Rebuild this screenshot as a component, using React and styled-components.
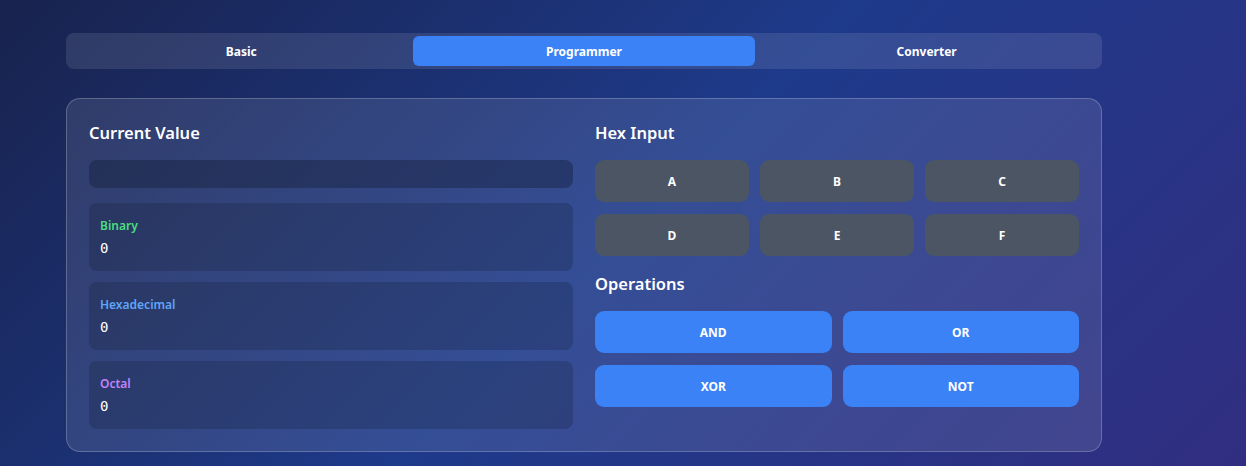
import React, { useState } from "react";
import styled, { createGlobalStyle } from "styled-components";

const GlobalStyle = createGlobalStyle`
	html, body {
		margin: 0;
		padding: 0;
		height: 100%;
	}
	body {
		font-family: "Noto Sans", "Open Sans", sans-serif;
		background: linear-gradient(135deg, #18224d 0%, #1e3a8a 50%, #312e81 100%);
		color: #fff;
		overflow: hidden;
	}
`;

const Page = styled.div`
	width: 1036px;
	margin: 0 0 0 66px;
	padding-top: 33px;
`;

const Tabs = styled.div`
	display: grid;
	grid-template-columns: repeat(3, 1fr);
	padding: 3px 4px;
	border-radius: 8px;
	background: rgba(255, 255, 255, 0.1);
	margin-bottom: 29px;
`;

const Tab = styled.button`
	height: 30px;
	border: none;
	border-radius: 6px;
	font-family: inherit;
	font-size: 12px;
	font-weight: 700;
	color: #fff;
	cursor: pointer;
	background: ${(p) => (p.active ? "#3b82f6" : "transparent")};
`;

const Card = styled.div`
	display: grid;
	grid-template-columns: 1fr 1fr;
	gap: 22px;
	padding: 22px 22px 22px;
	border: 1px solid rgba(255, 255, 255, 0.22);
	border-radius: 14px;
	background: rgba(255, 255, 255, 0.1);
`;

const Column = styled.div`
	display: flex;
	flex-direction: column;
`;

const Heading = styled.h2`
	margin: 0 0 15px;
	font-size: 16.5px;
	font-weight: 600;
	line-height: 24px;
	color: #fff;
`;

const ValueBar = styled.div`
	height: 28px;
	border-radius: 8px;
	background: rgba(15, 23, 42, 0.35);
	margin-bottom: 15px;
`;

const BaseList = styled.div`
	display: flex;
	flex-direction: column;
	gap: 11px;
`;

const BaseBox = styled.div`
	height: 68px;
	box-sizing: border-box;
	padding: 14px 11px 0;
	border-radius: 8px;
	background: rgba(15, 23, 42, 0.22);
`;

const BaseLabel = styled.div`
	font-size: 12px;
	font-weight: 600;
	line-height: 17px;
	color: ${(p) => p.color};
`;

const BaseValue = styled.div`
	margin-top: 4px;
	font-family: "DejaVu Sans Mono", "Liberation Mono", monospace;
	font-size: 14px;
	line-height: 20px;
	color: #fff;
`;

const KeyGrid = styled.div`
	display: grid;
	grid-template-columns: repeat(${(p) => p.cols}, 1fr);
	gap: 12px 11px;
	margin-bottom: ${(p) => (p.spaced ? "16px" : "0")};
`;

const Key = styled.button`
	height: 42px;
	border: none;
	border-radius: 9px;
	font-family: inherit;
	font-size: 12px;
	font-weight: 700;
	color: #fff;
	cursor: pointer;
	background: ${(p) => (p.blue ? "#3b82f6" : "#4b5563")};
`;

const bases = [
	{ label: "Binary", color: "#4ade80" },
	{ label: "Hexadecimal", color: "#60a5fa" },
	{ label: "Octal", color: "#c084fc" },
];

const App = () => {
	const [mode, setMode] = useState("Programmer");

	return (
		<>
			<GlobalStyle />
			<Page>
				<Tabs>
					{["Basic", "Programmer", "Converter"].map((t) => (
						<Tab key={t} active={mode === t} onClick={() => setMode(t)}>
							{t}
						</Tab>
					))}
				</Tabs>

				<Card>
					<Column>
						<Heading>Current Value</Heading>
						<ValueBar />
						<BaseList>
							{bases.map((b) => (
								<BaseBox key={b.label}>
									<BaseLabel color={b.color}>{b.label}</BaseLabel>
									<BaseValue>0</BaseValue>
								</BaseBox>
							))}
						</BaseList>
					</Column>

					<Column>
						<Heading>Hex Input</Heading>
						<KeyGrid cols={3} spaced>
							{["A", "B", "C", "D", "E", "F"].map((k) => (
								<Key key={k}>{k}</Key>
							))}
						</KeyGrid>
						<Heading>Operations</Heading>
						<KeyGrid cols={2}>
							{["AND", "OR", "XOR", "NOT"].map((k) => (
								<Key key={k} blue>
									{k}
								</Key>
							))}
						</KeyGrid>
					</Column>
				</Card>
			</Page>
		</>
	);
};

export default App;
